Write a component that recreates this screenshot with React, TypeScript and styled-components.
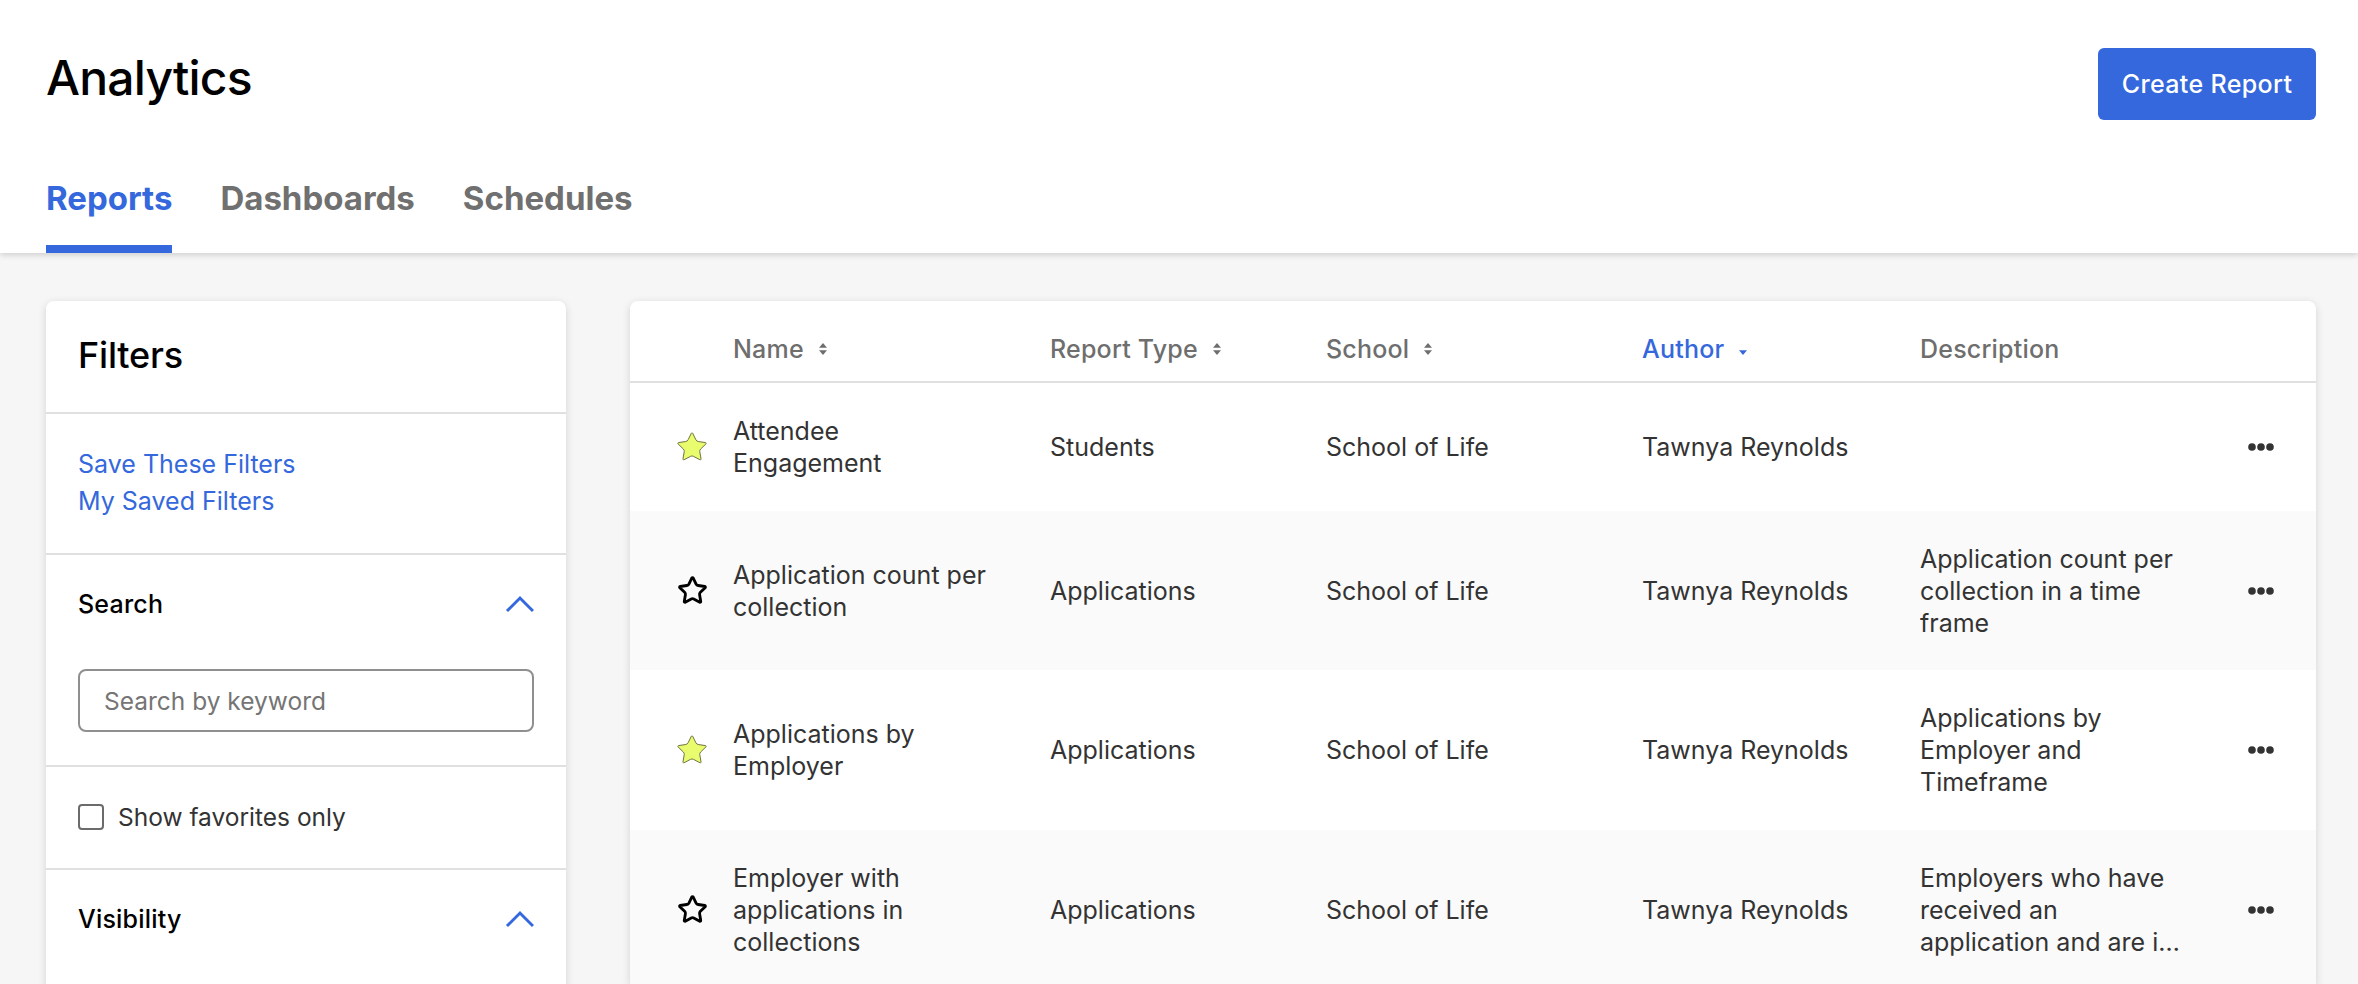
import React from "react";
import styled, { createGlobalStyle } from "styled-components";
import { Star } from "lucide-react";

const BLUE = "#3468dc";

const GlobalStyle = createGlobalStyle`
  html, body {
    margin: 0;
    height: 100%;
    overflow: hidden;
    background: #f6f6f6;
    font-family: Inter, "Liberation Sans", sans-serif;
    color: #333;
  }
  * { box-sizing: border-box; }
`;

const PageHeader = styled.header`
  background: #fff;
  height: 253px;
  padding: 48px 42px 0 46px;
  box-shadow: 0 2px 6px rgba(0, 0, 0, 0.16);
  position: relative;
`;

const TitleRow = styled.div`
  display: flex;
  justify-content: space-between;
  align-items: flex-start;
`;

const Title = styled.h1`
  margin: 0;
  font-size: 48px;
  line-height: 60px;
  font-weight: 500;
  letter-spacing: -0.8px;
  color: #000;
`;

const CreateButton = styled.button`
  width: 218px;
  height: 72px;
  border: 0;
  border-radius: 6px;
  background: ${BLUE};
  color: #fff;
  font: 500 25px/32px Inter, sans-serif;
  letter-spacing: 0.35px;
`;

const Tabs = styled.nav`
  display: flex;
  gap: 48px;
  margin-top: 58px;
`;

const Tab = styled.a<{ $active?: boolean }>`
  font-size: 33px;
  line-height: 40px;
  font-weight: 700;
  padding-bottom: 27px;
  color: ${(p) => (p.$active ? BLUE : "#707070")};
  border-bottom: 8px solid ${(p) => (p.$active ? BLUE : "transparent")};
`;

const Content = styled.main`
  display: flex;
  align-items: flex-start;
  gap: 64px;
  padding: 48px 42px 0 46px;
`;

const Card = styled.section`
  background: #fff;
  border-radius: 8px;
  box-shadow: 0 2px 8px rgba(0, 0, 0, 0.14);
  overflow: hidden;
`;

const FilterCard = styled(Card)`
  width: 520px;
  min-height: 760px;
  flex: none;
`;

const FilterSection = styled.div`
  padding: 30px 32px 33px;
  border-bottom: 2px solid #e0e0e0;
  &:last-child { border-bottom: 0; }
`;

const FilterHeading = styled.h2`
  margin: 0;
  font-size: 36px;
  line-height: 48px;
  font-weight: 500;
  letter-spacing: -0.2px;
  color: #000;
`;

const LinkList = styled.div`
  display: flex;
  flex-direction: column;
  padding-top: 2px;
`;

const FilterLink = styled.a`
  font-size: 25px;
  line-height: 37px;
  color: ${BLUE};
`;

const SearchSection = styled(FilterSection)`
  padding-top: 31px;
`;

const FavoriteSection = styled(FilterSection)`
  padding-top: 32px;
`;

const VisibilitySection = styled(FilterSection)`
  padding-top: 31px;
`;

const SectionTitle = styled.div`
  display: flex;
  justify-content: space-between;
  align-items: center;
  font-size: 25px;
  line-height: 36px;
  font-weight: 500;
  letter-spacing: 0.2px;
  color: #000;
`;

const SearchInput = styled.input`
  display: block;
  width: 100%;
  height: 63px;
  margin-top: 47px;
  padding: 0 24px;
  border: 2.5px solid #8f8f8f;
  border-radius: 8px;
  font: 400 24.5px Inter, sans-serif;
  &::placeholder { color: #757575; opacity: 1; }
`;

const CheckRow = styled.label`
  display: flex;
  align-items: center;
  gap: 14px;
  font-size: 24.5px;
  line-height: 36px;
  color: #333;
`;

const CheckBox = styled.span`
  width: 26px;
  height: 26px;
  border: 2px solid #6b6b6b;
  border-radius: 4px;
`;

const TableCard = styled(Card)`
  flex: 1;
  min-width: 0;
`;

const COLUMNS = "103px 317px 276px 316px 278px 280px 1fr";

const HeadRow = styled.div`
  display: grid;
  grid-template-columns: ${COLUMNS};
  align-items: center;
  height: 82px;
  padding-top: 15px;
  border-bottom: 2px solid #e0e0e0;
`;

const HeadCell = styled.div<{ $active?: boolean }>`
  display: flex;
  align-items: center;
  gap: 15px;
  font-size: 25px;
  font-weight: 500;
  letter-spacing: 0.2px;
  color: ${(p) => (p.$active ? BLUE : "#6e6e6e")};
`;

const BodyRow = styled.div<{ $shade?: boolean }>`
  display: grid;
  grid-template-columns: ${COLUMNS};
  align-items: center;
  padding: 32px 0 31.5px;
  background: ${(p) => (p.$shade ? "#fafafa" : "#fff")};
  font-size: 25px;
  line-height: 32px;
  color: #333;
`;

const StarCell = styled.div`
  display: flex;
  justify-content: center;
  padding-left: 21px;
`;

const FavStar = styled(Star)<{ $on?: boolean }>`
  width: ${(p) => (p.$on ? 34 : 31)}px;
  height: ${(p) => (p.$on ? 34 : 31)}px;
  fill: ${(p) => (p.$on ? "#e8fc6e" : "none")};
  stroke: ${(p) => (p.$on ? "#6d7040" : "#000")};
  stroke-width: ${(p) => (p.$on ? 0.7 : 2.2)};
`;

const NameCell = styled.div`
  width: 258px;
`;

const DescCell = styled.div`
  width: 262px;
  display: -webkit-box;
  -webkit-box-orient: vertical;
  -webkit-line-clamp: 3;
  overflow: hidden;
`;

const MenuCell = styled.div`
  display: flex;
  justify-content: flex-end;
  padding-right: 42px;
`;

const SortIcon = ({ desc }: { desc?: boolean }) => (
  <svg width="8" height="12" viewBox="0 0 8 12" fill="currentColor">
    {!desc && <path d="M4 0 L8 4.8 H0 Z" />}
    <path d="M0 7.2 H8 L4 12 Z" />
  </svg>
);

const Chevron = () => (
  <svg width="30" height="18" viewBox="0 0 30 18" fill="none" stroke={BLUE} strokeWidth="3">
    <path d="M3 16 L16 3 L29 16" />
  </svg>
);

const Dots = () => (
  <svg width="26" height="8" viewBox="0 0 26 8" fill="#333">
    <circle cx="4" cy="4" r="3.8" />
    <circle cx="13" cy="4" r="3.8" />
    <circle cx="22" cy="4" r="3.8" />
  </svg>
);

const reports = [
  { name: "Attendee Engagement", type: "Students", desc: "", fav: true },
  {
    name: "Application count per collection",
    type: "Applications",
    desc: "Application count per collection in a time frame",
    fav: false,
  },
  {
    name: "Applications by Employer",
    type: "Applications",
    desc: "Applications by Employer and Timeframe",
    fav: true,
  },
  {
    name: "Employer with applications in collections",
    type: "Applications",
    desc: "Employers who have received an application and are in collections",
    fav: false,
  },
];

export default function App() {
  return (
    <>
      <GlobalStyle />
      <PageHeader>
        <TitleRow>
          <Title>Analytics</Title>
          <CreateButton>Create Report</CreateButton>
        </TitleRow>
        <Tabs>
          <Tab $active>Reports</Tab>
          <Tab>Dashboards</Tab>
          <Tab>Schedules</Tab>
        </Tabs>
      </PageHeader>
      <Content>
        <FilterCard>
          <FilterSection>
            <FilterHeading>Filters</FilterHeading>
          </FilterSection>
          <FilterSection>
            <LinkList>
              <FilterLink>Save These Filters</FilterLink>
              <FilterLink>My Saved Filters</FilterLink>
            </LinkList>
          </FilterSection>
          <SearchSection>
            <SectionTitle>
              Search
              <Chevron />
            </SectionTitle>
            <SearchInput placeholder="Search by keyword" />
          </SearchSection>
          <FavoriteSection>
            <CheckRow>
              <CheckBox />
              Show favorites only
            </CheckRow>
          </FavoriteSection>
          <VisibilitySection>
            <SectionTitle>
              Visibility
              <Chevron />
            </SectionTitle>
          </VisibilitySection>
        </FilterCard>
        <TableCard>
          <HeadRow>
            <div />
            <HeadCell>Name <SortIcon /></HeadCell>
            <HeadCell>Report Type <SortIcon /></HeadCell>
            <HeadCell>School <SortIcon /></HeadCell>
            <HeadCell $active>Author <SortIcon desc /></HeadCell>
            <HeadCell>Description</HeadCell>
            <div />
          </HeadRow>
          {reports.map((r, i) => (
            <BodyRow key={r.name} $shade={i % 2 === 1}>
              <StarCell>
                <FavStar $on={r.fav} />
              </StarCell>
              <NameCell>{r.name}</NameCell>
              <div>{r.type}</div>
              <div>School of Life</div>
              <div>Tawnya Reynolds</div>
              <DescCell>{r.desc}</DescCell>
              <MenuCell>
                <Dots />
              </MenuCell>
            </BodyRow>
          ))}
        </TableCard>
      </Content>
    </>
  );
}
